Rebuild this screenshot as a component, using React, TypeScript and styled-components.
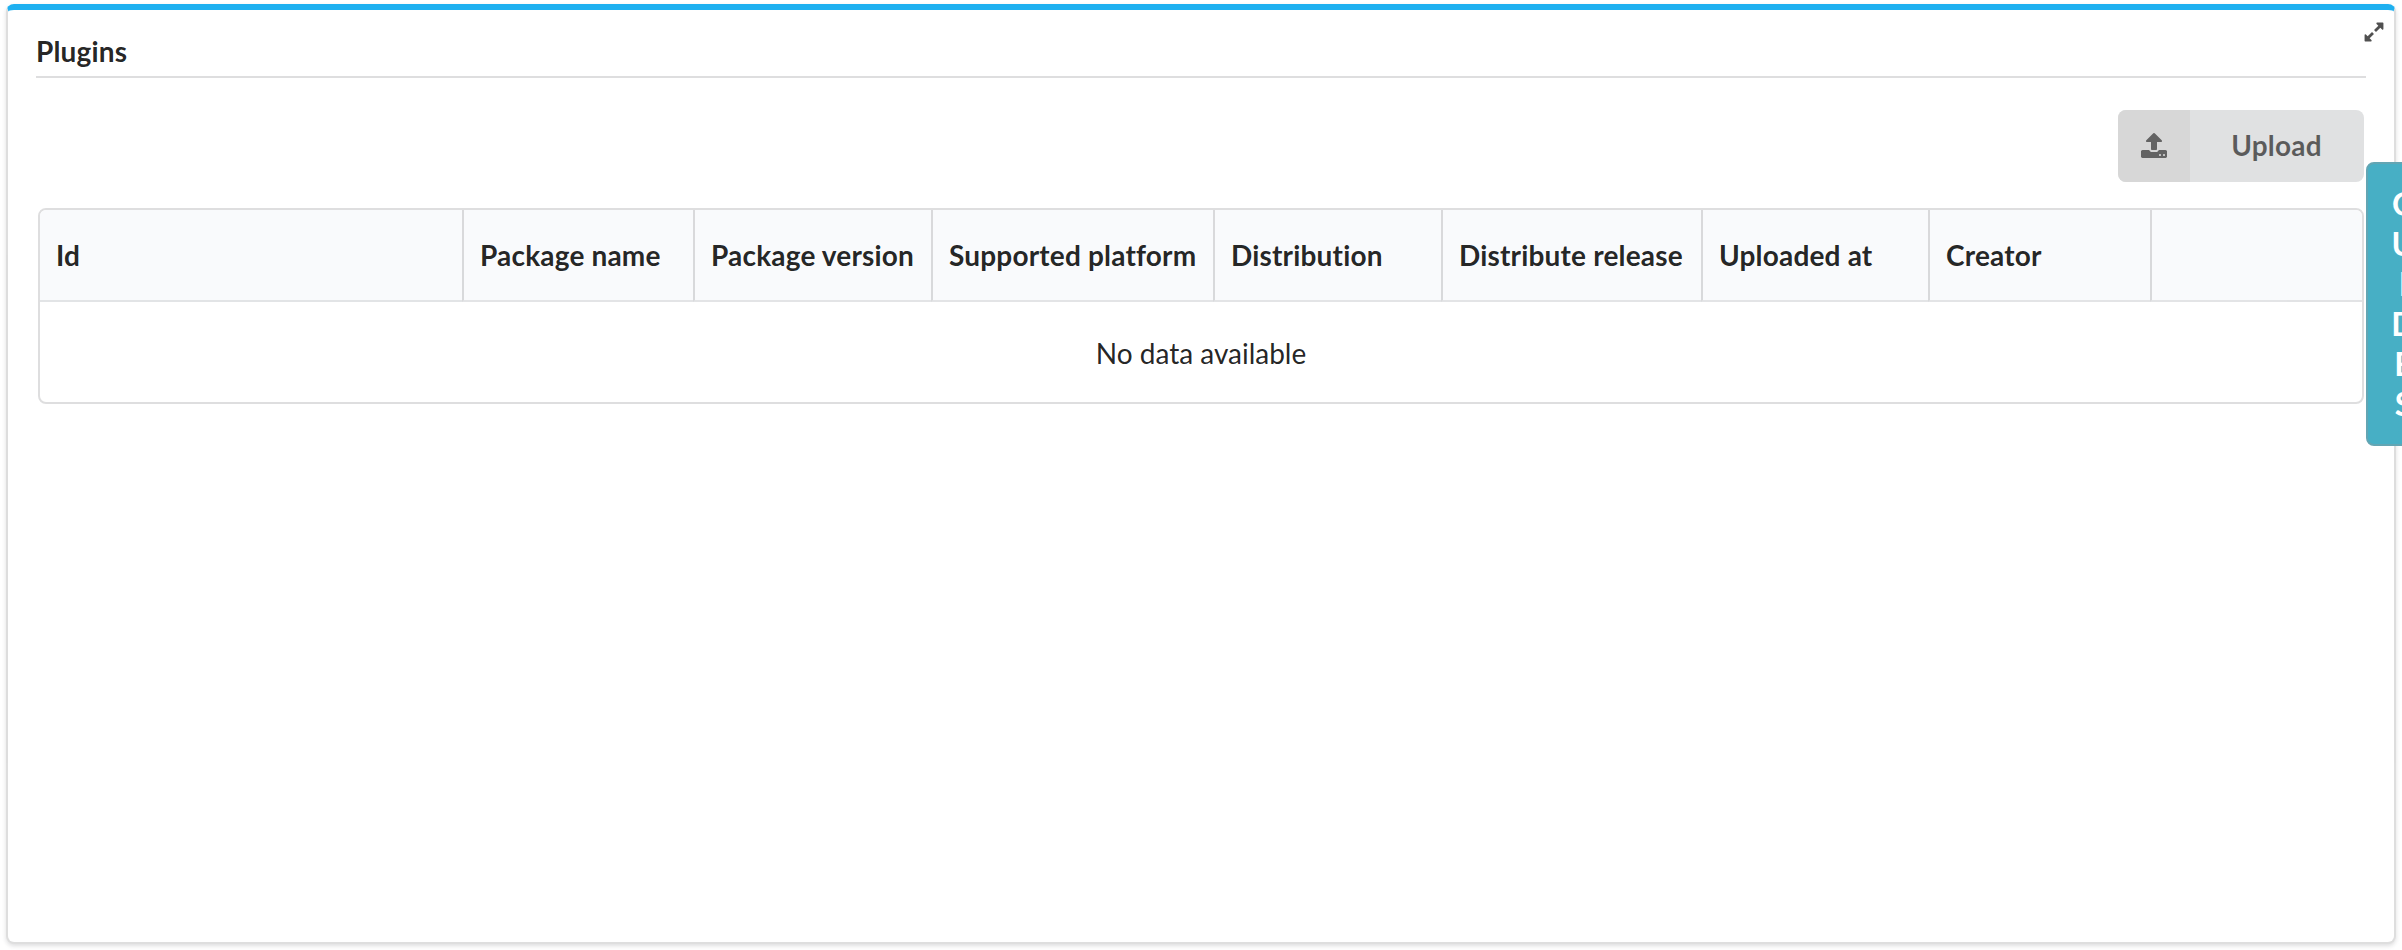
import React from 'react';
import styled, { createGlobalStyle } from 'styled-components';

const GlobalStyle = createGlobalStyle`
  *, *::before, *::after { box-sizing: border-box; }
  body {
    margin: 0;
    overflow: hidden;
    background: #fff;
    color: rgba(0, 0, 0, 0.87);
    font-family: Lato, 'Liberation Sans', sans-serif;
    font-size: 28px;
    font-variant-ligatures: none;
    line-height: 36px;
  }
`;

const Page = styled.main`
  display: flex;
  height: 950px;
  padding: 4px 6px 6px;
`;

const Widget = styled.section`
  flex: 1;
  display: flex;
  flex-direction: column;
  padding: 23px 28px 0;
  border: 2px solid rgba(34, 36, 38, 0.15);
  border-top: 6px solid #1eb0f0;
  border-radius: 8px;
  box-shadow: 0 2px 4px 0 rgba(34, 36, 38, 0.15);
`;

const WidgetHeader = styled.header`
  display: flex;
  justify-content: space-between;
  height: 45px;
  border-bottom: 2px solid rgba(34, 36, 38, 0.15);
`;

const Title = styled.h5`
  margin: 0;
  font-size: 28px;
  font-weight: 700;
  letter-spacing: 0.18px;
`;

const ExpandButton = styled.button`
  display: flex;
  width: 22px;
  height: 22px;
  margin: -12px -19px 0 0;
  padding: 0;
  border: 0;
  background: none;
  color: #505050;
`;

const Icon = styled.svg<{ $size: number }>`
  display: block;
  flex: none;
  width: ${(p) => p.$size}px;
  height: ${(p) => p.$size}px;
  fill: currentColor;
`;

const Toolbar = styled.div`
  display: flex;
  justify-content: flex-end;
  padding: 32px 2px 26px;
`;

const LabeledButton = styled.button`
  display: flex;
  width: 246px;
  height: 72px;
  padding: 0;
  overflow: hidden;
  border: 0;
  border-radius: 8px;
  background: #e0e1e2;
  color: rgba(0, 0, 0, 0.6);
  font: 700 28px/36px Lato, 'Liberation Sans', sans-serif;
`;

const ButtonIcon = styled.span`
  display: flex;
  align-items: center;
  justify-content: center;
  width: 72px;
  height: 72px;
  padding-right: 1px;
  background: #d7d7d7;
  color: #636363;
`;

const ButtonLabel = styled.span`
  flex: 1;
  padding: 17px 1px 0 0;
  letter-spacing: 0.18px;
  text-align: center;
`;

const Table = styled.table`
  width: 2326px;
  margin: 0 2px;
  table-layout: fixed;
  border: 2px solid rgba(34, 36, 38, 0.15);
  border-collapse: separate;
  border-spacing: 0;
  border-radius: 8px;
  overflow: hidden;
`;

const HeadCell = styled.th<{ $width: number }>`
  width: ${(p) => p.$width}px;
  height: 92px;
  padding: 0 0 0 16px;
  border-bottom: 2px solid rgba(34, 36, 38, 0.1);
  border-left: 2px solid rgba(34, 36, 38, 0.15);
  background: #f9fafc;
  text-align: left;
  font-weight: 700;
  letter-spacing: 0.18px;
  white-space: nowrap;

  &:first-child { border-left: 0; }
`;

const EmptyCell = styled.td`
  height: 100px;
  padding: 2px 0 0;
  text-align: center;
`;

const GuidesTab = styled.button`
  position: fixed;
  top: 162px;
  left: 2366px;
  display: flex;
  flex-direction: column;
  align-items: center;
  width: 75px;
  height: 284px;
  padding: 20px 0;
  border: 2px solid #63a5b3;
  border-radius: 8px;
  background: #47afc5;
  color: #fff;
  font: 700 32px/40px Lato, 'Liberation Sans', sans-serif;
`;

const columns = [
  { label: 'Id', width: 422 },
  { label: 'Package name', width: 231 },
  { label: 'Package version', width: 238 },
  { label: 'Supported platform', width: 282 },
  { label: 'Distribution', width: 228 },
  { label: 'Distribute release', width: 260 },
  { label: 'Uploaded at', width: 227 },
  { label: 'Creator', width: 222 },
  { label: '', width: 212 },
];

const ExpandIcon = () => (
  <Icon $size={22} viewBox="0 0 1792 1792">
    <path d="M883 1056q0 13-10 23l-332 332 144 144q19 19 19 45t-19 45-45 19h-448q-26 0-45-19t-19-45v-448q0-26 19-45t45-19 45 19l144 144 332-332q10-10 23-10t23 10l114 114q10 10 10 23zm781-864v448q0 26-19 45t-45 19-45-19l-144-144-332 332q-10 10-23 10t-23-10l-114-114q-10-10-10-23t10-23l332-332-144-144q-19-19-19-45t19-45 45-19h448q26 0 45 19t19 45z" />
  </Icon>
);

const UploadIcon = () => (
  <Icon $size={28} viewBox="0 0 1792 1792">
    <path d="M1344 1472q0-26-19-45t-45-19-45 19-19 45 19 45 45 19 45-19 19-45zm256 0q0-26-19-45t-45-19-45 19-19 45 19 45 45 19 45-19 19-45zm128-224v320q0 40-28 68t-68 28h-1472q-40 0-68-28t-28-68v-320q0-40 28-68t68-28h427q21 56 70.5 92t110.5 36h256q61 0 110.5-36t70.5-92h427q40 0 68 28t28 68zm-325-648q-17 40-59 40h-256v448q0 26-19 45t-45 19h-256q-26 0-45-19t-19-45v-448h-256q-42 0-59-40-17-39 14-69l448-448q18-19 45-19t45 19l448 448q31 30 14 69z" />
  </Icon>
);

export default function App() {
  return (
    <Page>
      <GlobalStyle />
      <Widget>
        <WidgetHeader>
          <Title>Plugins</Title>
          <ExpandButton aria-label="Expand">
            <ExpandIcon />
          </ExpandButton>
        </WidgetHeader>
        <Toolbar>
          <LabeledButton>
            <ButtonIcon>
              <UploadIcon />
            </ButtonIcon>
            <ButtonLabel>Upload</ButtonLabel>
          </LabeledButton>
        </Toolbar>
        <Table>
          <thead>
            <tr>
              {columns.map((column) => (
                <HeadCell key={column.label} $width={column.width}>
                  {column.label}
                </HeadCell>
              ))}
            </tr>
          </thead>
          <tbody>
            <tr>
              <EmptyCell colSpan={columns.length}>No data available</EmptyCell>
            </tr>
          </tbody>
        </Table>
      </Widget>
      <GuidesTab>
        {'GUIDES'.split('').map((letter) => (
          <span key={letter}>{letter}</span>
        ))}
      </GuidesTab>
    </Page>
  );
}
